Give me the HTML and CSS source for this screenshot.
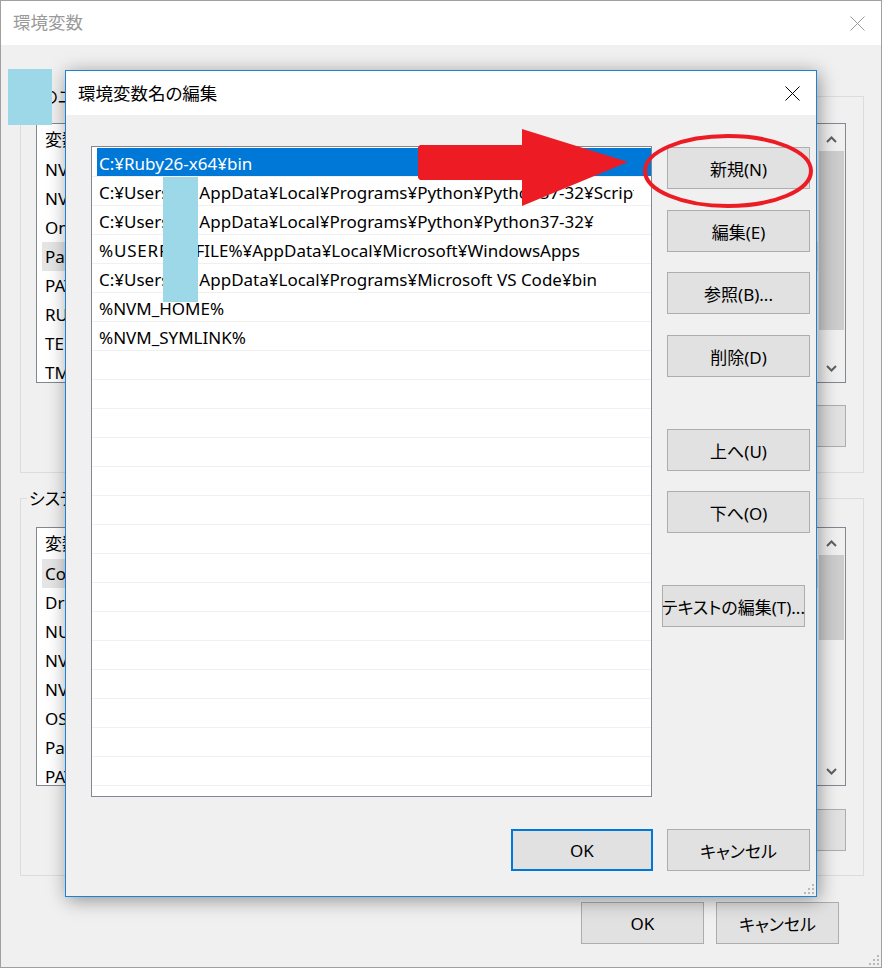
FILE: index.html
```html
<!DOCTYPE html>
<html lang="ja">
<head>
<meta charset="utf-8">
<title>環境変数名の編集</title>
<link rel="stylesheet" href="styles.css">
</head>
<body>
<div class="window">
  <div class="titlebar">
    <span class="title">環境変数</span>
    <svg class="close" width="15" height="15" viewBox="0 0 15 15"><path d="M0.5 0.5L14.5 14.5M14.5 0.5L0.5 14.5" stroke="#999" stroke-width="1"/></svg>
  </div>
  <div class="win-body">
    <div class="group g1">
      <div class="group-label">Uのユーザー環境変数</div>
      <div class="listbox">
        <div class="lb-rows">
          <div class="lb-head">変数</div>
          <div class="lb-row">NVM_HOME</div>
          <div class="lb-row">NVM_SYMLINK</div>
          <div class="lb-row">OneDrive</div>
          <div class="lb-row sel">Path</div>
          <div class="lb-row">PATHEXT</div>
          <div class="lb-row">RUBYOPT</div>
          <div class="lb-row">TEMP</div>
          <div class="lb-row">TMP</div>
        </div>
        <div class="vscroll">
          <div class="sb-btn up"><svg width="11" height="7" viewBox="0 0 11 7"><path d="M1 6L5.5 1.5L10 6" fill="none" stroke="#606060" stroke-width="2"/></svg></div>
          <div class="sb-track"><div class="sb-thumb"></div></div>
          <div class="sb-btn down"><svg width="11" height="7" viewBox="0 0 11 7"><path d="M1 1L5.5 5.5L10 1" fill="none" stroke="#606060" stroke-width="2"/></svg></div>
        </div>
      </div>
      <div class="group-buttons">
        <button class="btn">新規(N)...</button>
        <button class="btn">編集(E)...</button>
        <button class="btn">削除(D)</button>
      </div>
    </div>
    <div class="group g2">
      <div class="group-label">システム環境変数</div>
      <div class="listbox">
        <div class="lb-rows">
          <div class="lb-head">変数</div>
          <div class="lb-row sel">ComSpec</div>
          <div class="lb-row">DriverData</div>
          <div class="lb-row">NUMBER_OF_PROCESSORS</div>
          <div class="lb-row">NVM_HOME</div>
          <div class="lb-row">NVM_SYMLINK</div>
          <div class="lb-row">OS</div>
          <div class="lb-row">Path</div>
          <div class="lb-row">PATHEXT</div>
        </div>
        <div class="vscroll">
          <div class="sb-btn up"><svg width="11" height="7" viewBox="0 0 11 7"><path d="M1 6L5.5 1.5L10 6" fill="none" stroke="#606060" stroke-width="2"/></svg></div>
          <div class="sb-track"><div class="sb-thumb"></div></div>
          <div class="sb-btn down"><svg width="11" height="7" viewBox="0 0 11 7"><path d="M1 1L5.5 5.5L10 1" fill="none" stroke="#606060" stroke-width="2"/></svg></div>
        </div>
      </div>
      <div class="group-buttons">
        <button class="btn">新規(W)...</button>
        <button class="btn">編集(I)...</button>
        <button class="btn">削除(L)</button>
      </div>
    </div>
    <div class="win-actions">
      <button class="btn">OK</button>
      <button class="btn">キャンセル</button>
    </div>
  </div>
  <svg class="grip" width="12" height="12" viewBox="0 0 12 12"><g fill="#b9b9b9"><rect x="9" y="1" width="2" height="2"/><rect x="5" y="5" width="2" height="2"/><rect x="9" y="5" width="2" height="2"/><rect x="1" y="9" width="2" height="2"/><rect x="5" y="9" width="2" height="2"/><rect x="9" y="9" width="2" height="2"/></g></svg>
</div>

<div class="dialog">
  <div class="dlg-title">
    <span>環境変数名の編集</span>
    <svg class="close" width="15" height="15" viewBox="0 0 15 15"><path d="M0.5 0.5L14.5 14.5M14.5 0.5L0.5 14.5" stroke="#000" stroke-width="1"/></svg>
  </div>
  <div class="dlg-body">
    <div class="dlg-main">
      <div class="pathlist">
        <div class="prow sel"><div class="cell"><span class="txt">C:¥Ruby26-x64¥bin</span></div></div>
        <div class="prow"><div class="cell"><span class="txt">C:¥Users<span class="gap"></span>AppData¥Local¥Programs¥Python¥Python37-32¥Scripts¥</span></div></div>
        <div class="prow"><div class="cell"><span class="txt">C:¥Users<span class="gap"></span>AppData¥Local¥Programs¥Python¥Python37-32¥</span></div></div>
        <div class="prow"><div class="cell"><span class="txt"><span class="wide">%USERPRO</span>FILE%¥AppData¥Local¥Microsoft¥WindowsApps</span></div></div>
        <div class="prow"><div class="cell"><span class="txt">C:¥Users<span class="gap"></span>AppData¥Local¥Programs¥Microsoft VS Code¥bin</span></div></div>
        <div class="prow"><div class="cell"><span class="txt">%NVM_HOME%</span></div></div>
        <div class="prow"><div class="cell"><span class="txt">%NVM_SYMLINK%</span></div></div>
        <div class="prow"></div><div class="prow"></div><div class="prow"></div><div class="prow"></div><div class="prow"></div>
        <div class="prow"></div><div class="prow"></div><div class="prow"></div><div class="prow"></div><div class="prow"></div>
        <div class="prow"></div><div class="prow"></div><div class="prow"></div><div class="prow"></div><div class="prow"></div>
      </div>
      <div class="side">
        <button class="btn">新規(N)</button>
        <button class="btn b2">編集(E)</button>
        <button class="btn b3">参照(B)...</button>
        <button class="btn b4">削除(D)</button>
        <button class="btn b5">上へ(U)</button>
        <button class="btn b6">下へ(O)</button>
        <button class="btn b7">テキストの編集(T)...</button>
      </div>
    </div>
    <div class="dlg-actions">
      <button class="btn ok">OK</button>
      <button class="btn cancel">キャンセル</button>
    </div>
  </div>
  <svg class="grip" width="12" height="12" viewBox="0 0 12 12"><g fill="#b9b9b9"><rect x="9" y="1" width="2" height="2"/><rect x="5" y="5" width="2" height="2"/><rect x="9" y="5" width="2" height="2"/><rect x="1" y="9" width="2" height="2"/><rect x="5" y="9" width="2" height="2"/><rect x="9" y="9" width="2" height="2"/></g></svg>
</div>

<div class="redact r1"></div>
<div class="redact r2"></div>

<svg class="annot" width="882" height="968" viewBox="0 0 882 968">
  <polygon points="420,145 522,145 522,129 628,162 522,206 522,180 420,180 418,178 418,147" fill="#ed1c24"/>
  <ellipse cx="728" cy="171" rx="83" ry="35" fill="none" stroke="#ed1c24" stroke-width="4"/>
</svg>
</body>
</html>
```

FILE: styles.css
```css
* { box-sizing: border-box; }
html, body { margin: 0; padding: 0; }
body {
  width: 882px;
  height: 968px;
  position: relative;
  overflow: hidden;
  background: #f0f0f0;
  color: #000;
  font-family: "Noto Sans", "Noto Sans CJK JP", sans-serif;
  font-size: 17px;
  font-feature-settings: "palt";
}

/* background window */
.window {
  position: relative;
  width: 882px;
  height: 968px;
  border: 1px solid #a0a0a0;
  background: #f0f0f0;
  display: flex;
  flex-direction: column;
}
.titlebar {
  height: 44px;
  flex: none;
  background: #fff;
  display: flex;
  align-items: center;
  justify-content: space-between;
  padding: 0 16px 3px 12px;
}
.titlebar .close { margin-top: 3px; }
.title { color: #999; font-size: 17.5px; }
.close { display: block; }
.win-body { flex: 1; padding-top: 51px; }

.group {
  margin: 0 17px 0 19px;
  border: 1px solid #dcdcdc;
  padding: 0 17px 25px 15px;
}
.g2 { margin-top: 25px; padding-bottom: 24px; }
.group-label {
  width: max-content;
  margin: -10px 0 0 -9px;
  padding: 0 2px;
  line-height: 20px;
  background: #f0f0f0;
}

.listbox {
  border: 1px solid #828790;
  background: #fff;
  display: flex;
  overflow: hidden;
}
.g1 .listbox { margin-top: 16px; height: 260px; }
.g2 .listbox { margin-top: 18px; height: 259px; }
.lb-rows { flex: 1; overflow: hidden; }
.lb-head { height: 31px; line-height: 31px; padding-left: 8px; }
.lb-row {
  height: 29px;
  line-height: 29px;
  margin-left: 5px;
  padding-left: 3px;
  white-space: nowrap;
}
.lb-row.sel { background: #e5e5e5; }

.vscroll {
  width: 27px;
  flex: none;
  display: flex;
  flex-direction: column;
  background: #f0f0f0;
}
.sb-btn { height: 27px; flex: none; display: flex; justify-content: center; }
.sb-btn.up { align-items: flex-end; padding-bottom: 8px; }
.sb-btn.down { align-items: center; }
.sb-btn svg { display: block; }
.sb-track { flex: 1; padding: 0 1px; }
.sb-thumb { background: #cdcdcd; }
.g1 .sb-thumb { height: 179px; }
.g2 .sb-thumb { height: 85px; }

.btn {
  height: 42px;
  margin: 0;
  padding: 0;
  background: #e1e1e1;
  border: 1px solid #adadad;
  border-radius: 0;
  color: #000;
  font: inherit;
  white-space: nowrap;
  display: flex;
  align-items: center;
  justify-content: center;
}
.group-buttons {
  display: flex;
  justify-content: flex-end;
  gap: 12px;
  margin-top: 22px;
}
.g2 .group-buttons { margin-top: 23px; }
.group-buttons .btn { width: 123px; }
.win-actions {
  display: flex;
  justify-content: flex-end;
  gap: 12px;
  margin-top: 26px;
  padding-right: 42px;
}
.win-actions .btn { width: 123px; }

.grip { position: absolute; right: 1px; bottom: 1px; display: block; }

/* foreground dialog */
.dialog {
  position: absolute;
  left: 65px;
  top: 70px;
  width: 752px;
  height: 827px;
  border: 1px solid #1883d7;
  background: #f0f0f0;
  box-shadow: 2px 3px 18px rgba(0, 0, 0, 0.4);
  display: flex;
  flex-direction: column;
}
.dlg-title {
  height: 44px;
  flex: none;
  background: #fff;
  display: flex;
  align-items: center;
  justify-content: space-between;
  padding: 0 16px 2px 12px;
  font-size: 17.5px;
}
.dlg-title .close { margin-top: 2px; }
.dlg-body {
  flex: 1;
  display: flex;
  flex-direction: column;
  padding: 31px 6px 25px 25px;
}
.dlg-main { display: flex; gap: 15px; height: 651px; flex: none; }
.pathlist {
  width: 561px;
  border: 1px solid #828790;
  background: #fff;
  padding-top: 1px;
  overflow: hidden;
}
.prow {
  height: 29px;
  border-bottom: 1px solid #f0f0f0;
  display: flex;
}
.cell {
  flex: 1;
  margin-left: 5px;
  padding: 2px 0 0 2px;
  line-height: 28px;
  white-space: nowrap;
  overflow: hidden;
}
.txt { display: block; width: 535px; overflow: hidden; }
.wide { letter-spacing: 0.8px; }
.prow.sel .cell { background: #0078d7; color: #fff; }
.gap { display: inline-block; width: 30px; }

.side { width: 143px; flex: none; display: flex; flex-direction: column; padding-top: 1px; }
.side .btn { width: 143px; flex: none; }
.side .b2 { margin-top: 21px; }
.side .b3 { margin-top: 20px; }
.side .b4 { margin-top: 21px; }
.side .b5 { margin-top: 52px; }
.side .b6 { margin-top: 20px; }
.side .b7 { margin-top: 52px; margin-left: -5px; }

.dlg-actions {
  display: flex;
  justify-content: flex-end;
  gap: 14px;
  margin-top: 32px;
}
.dlg-actions .ok { width: 142px; border: 2px solid #0078d7; }
.dlg-actions .cancel { width: 143px; }

/* overlays */
.redact { position: absolute; background: #9dd8e9; }
.r1 { left: 8px; top: 69px; width: 44px; height: 56px; }
.r2 { left: 163px; top: 177px; width: 35px; height: 125px; }
.annot { position: absolute; left: 0; top: 0; pointer-events: none; }
```
